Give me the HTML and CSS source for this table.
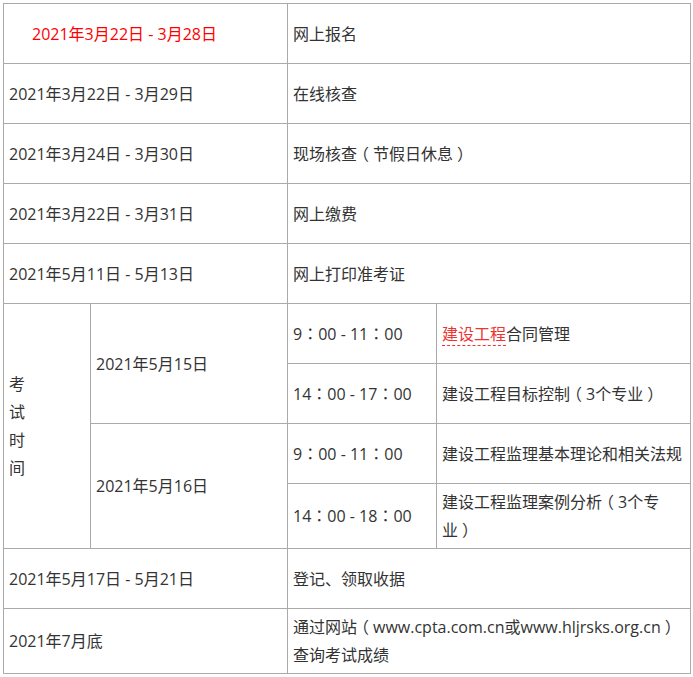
FILE: index.html
```html
<!DOCTYPE html>
<html lang="zh-CN">
<head>
<meta charset="utf-8">
<title>考试时间安排</title>
<link rel="stylesheet" href="styles.css">
</head>
<body>
<table class="schedule">
  <colgroup>
    <col class="c1"><col class="c2"><col class="c3"><col class="c4">
  </colgroup>
  <tr>
    <td colspan="2" class="indent red">2021年3月22日 - 3月28日</td>
    <td colspan="2">网上报名</td>
  </tr>
  <tr>
    <td colspan="2">2021年3月22日 - 3月29日</td>
    <td colspan="2">在线核查</td>
  </tr>
  <tr>
    <td colspan="2">2021年3月24日 - 3月30日</td>
    <td colspan="2">现场核查<span class="pr">（</span>节假日休息<span class="pr">）</span></td>
  </tr>
  <tr>
    <td colspan="2">2021年3月22日 - 3月31日</td>
    <td colspan="2">网上缴费</td>
  </tr>
  <tr>
    <td colspan="2">2021年5月11日 - 5月13日</td>
    <td colspan="2">网上打印准考证</td>
  </tr>
  <tr>
    <td rowspan="4">考<br>试<br>时<br>间</td>
    <td rowspan="2">2021年5月15日</td>
    <td>9<span class="p">：</span>00 - 11<span class="p">：</span>00</td>
    <td><a class="kw">建设工程</a>合同管理</td>
  </tr>
  <tr>
    <td>14<span class="p">：</span>00 - 17<span class="p">：</span>00</td>
    <td>建设工程目标控制<span class="pr">（</span>3个专业<span class="pr">）</span></td>
  </tr>
  <tr>
    <td rowspan="2">2021年5月16日</td>
    <td>9<span class="p">：</span>00 - 11<span class="p">：</span>00</td>
    <td>建设工程监理基本理论和相关法规</td>
  </tr>
  <tr>
    <td>14<span class="p">：</span>00 - 18<span class="p">：</span>00</td>
    <td>建设工程监理案例分析<span class="pr">（</span>3个专业<span class="pr">）</span></td>
  </tr>
  <tr>
    <td colspan="2">2021年5月17日 - 5月21日</td>
    <td colspan="2">登记、领取收据</td>
  </tr>
  <tr>
    <td colspan="2">2021年7月底</td>
    <td colspan="2">通过网站<span class="pr">（</span>www.cpta.com.cn或www.hljrsks.org.cn<span class="pr">）</span>查询考试成绩</td>
  </tr>
</table>
</body>
</html>
```
FILE: styles.css
```css
html, body {
  margin: 0;
  padding: 0;
  background: #fff;
}
body {
  padding: 3px;
  font-family: "Open Sans", "Noto Sans CJK SC", sans-serif;
  font-size: 16px;
  color: #333;
}
.schedule {
  border-collapse: collapse;
  table-layout: fixed;
  width: 687px;
}
.c1 { width: 87px; }
.c2 { width: 197px; }
.c3 { width: 149px; }
.c4 { width: 254px; }
.schedule td {
  border: 1px solid #aaa;
  padding: 4px 5px;
  line-height: 28px;
  vertical-align: middle;
  height: 51px;
}
.schedule td.indent { padding-left: 28px; }
.red { color: #f00; }
.p {
  font-family: "Noto Sans CJK TC", sans-serif;
  line-height: 0;
}
.pr {
  font-family: "Noto Sans CJK SC", sans-serif;
  font-feature-settings: "halt";
  padding: 0 4px;
  line-height: 0;
}
.kw {
  color: #e33;
  border-bottom: 1px dashed #e33;
  text-decoration: none;
}
```
